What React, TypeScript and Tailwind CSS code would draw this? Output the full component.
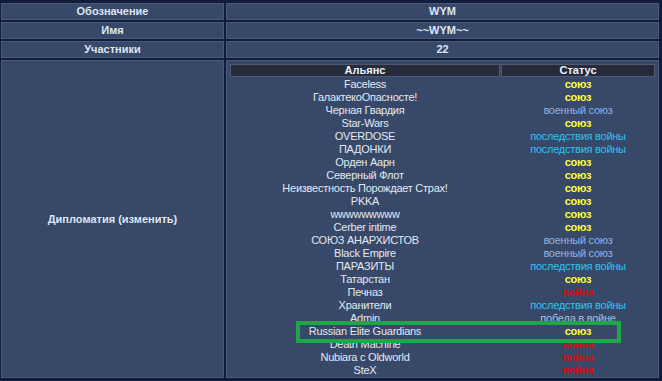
import React from "react";

type Rel = "ally" | "milAlly" | "aftermath" | "war" | "victory";

const rows: [string, Rel][] = [
  ["Faceless", "ally"],
  ["ГалактекоОпасносте!", "ally"],
  ["Черная Гвардия", "milAlly"],
  ["Star-Wars", "ally"],
  ["OVERDOSE", "aftermath"],
  ["ПАДОНКИ", "aftermath"],
  ["Орден Аарн", "ally"],
  ["Северный Флот", "ally"],
  ["Неизвестность Порождает Страх!", "ally"],
  ["PKKA", "ally"],
  ["wwwwwwwww", "ally"],
  ["Cerber intime", "ally"],
  ["СОЮЗ АНАРХИСТОВ", "milAlly"],
  ["Black Empire", "milAlly"],
  ["ПАРАЗИТЫ", "aftermath"],
  ["Татарстан", "ally"],
  ["Печназ", "war"],
  ["Хранители", "aftermath"],
  ["Admin", "victory"],
  ["Russian Elite Guardians", "ally"],
  ["Death Machine", "war"],
  ["Nubiara c Oldworld", "war"],
  ["SteX", "war"],
];

function Status({ rel }: { rel: Rel }) {
  if (rel === "ally") return <span className="font-bold text-[#ffff3a]">союз</span>;
  if (rel === "milAlly") return <span className="text-[#8db3e4]">военный союз</span>;
  if (rel === "aftermath") return <span className="text-[#2cc4f2]">последствия войны</span>;
  if (rel === "war") return <span className="font-bold text-[#d01010]">война</span>;
  return <span className="text-[#a9c0de]">победа в войне</span>;
}

const cell =
  "bg-[#374868] border border-[#4a5a7b] flex items-center justify-center";

export default function App() {
  return (
    <div className="relative w-[662px] h-[381px] overflow-hidden bg-[#111c3a] pt-[3px] pl-[1px] font-['Liberation_Sans',Arial,sans-serif] text-[11px] text-[#e3e9f3]">
      <div className="grid grid-cols-[223px_433px] grid-rows-[17px_17px_17px_318px] gap-[2px]">
        <div className={`${cell} font-bold text-[#dfe6f2]`}>Обозначение</div>
        <div className={`${cell} font-bold text-[#dfe6f2]`}>WYM</div>
        <div className={`${cell} font-bold text-[#dfe6f2]`}>Имя</div>
        <div className={`${cell} font-bold text-[#dfe6f2]`}>~~WYM~~</div>
        <div className={`${cell} font-bold text-[#dfe6f2]`}>Участники</div>
        <div className={`${cell} font-bold text-[#dfe6f2]`}>22</div>
        <div className={`${cell} font-bold text-[#dfe6f2]`}>Дипломатия (изменить)</div>
        <div className="bg-[#374868] border border-[#4a5a7b] p-[3px]">
          <div className="flex flex-col w-[425px]">
            <div className="flex h-[13px] gap-[1px]">
              <div className="w-[270px] bg-[#262b3b] border border-[#4f5973] flex items-center justify-center font-bold text-[#eef2f8] leading-[11px]">
                Альянс
              </div>
              <div className="w-[154px] bg-[#262b3b] border border-[#4f5973] flex items-center justify-center font-bold text-[#eef2f8] leading-[11px]">
                Статус
              </div>
            </div>
            <div className="flex flex-col pt-[1px] tracking-[-0.25px]">
              {rows.map(([name, rel]) => (
                <div key={name} className="flex h-[13px] leading-[13px] gap-[1px]">
                  <div className="w-[270px] text-center whitespace-nowrap">{name}</div>
                  <div className="w-[154px] text-center whitespace-nowrap">
                    <Status rel={rel} />
                  </div>
                </div>
              ))}
            </div>
          </div>
        </div>
      </div>
      {/* highlight frame around one alliance row */}
      <div className="absolute left-[296px] top-[321px] w-[325px] h-[22px] border-[4px] border-[#1fa747]" />
    </div>
  );
}
